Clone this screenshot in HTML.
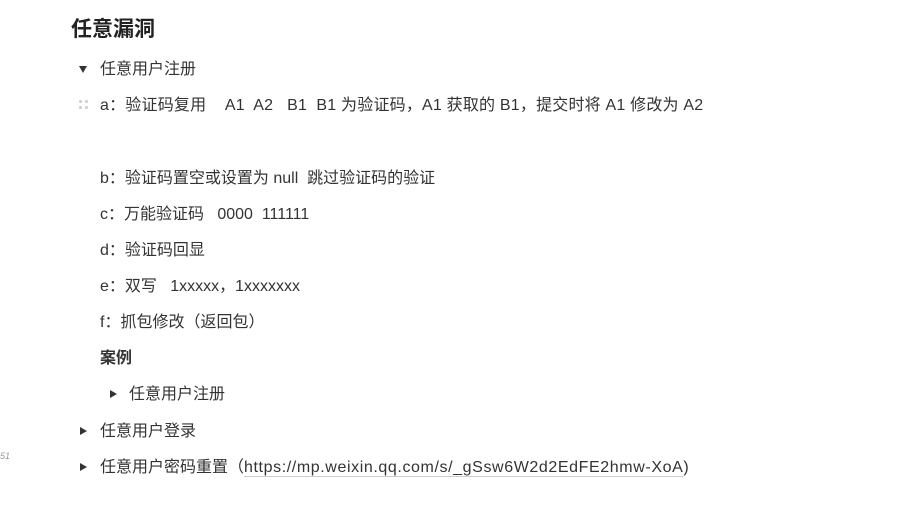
<!DOCTYPE html>
<html><head><meta charset="utf-8"><style>
body{margin:0;width:902px;height:506px;background:#fff;overflow:hidden;font-family:"Liberation Sans","Noto Sans CJK SC",sans-serif;color:#333;position:relative}
.l{position:absolute;font-size:16px;line-height:20px;white-space:pre}
.t{position:absolute;left:71px;top:17px;font-size:21px;font-weight:bold;color:#222;line-height:26px}
.tri{position:absolute;width:0;height:0}
.down{border-left:4.5px solid transparent;border-right:4.5px solid transparent;border-top:7px solid #333}
.right{border-top:4.5px solid transparent;border-bottom:4.5px solid transparent;border-left:7px solid #333}
.dot{position:absolute;width:3px;height:3px;border-radius:50%;background:#ccc}
</style></head><body>
<div class="t">任意漏洞</div>
<div class="tri down" style="left:79px;top:66px"></div>
<div class="l" style="left:100px;top:60px">任意用户注册</div>
<div class="dot" style="left:79px;top:100px"></div><div class="dot" style="left:85px;top:100px"></div>
<div class="dot" style="left:79px;top:106px"></div><div class="dot" style="left:85px;top:106px"></div>
<div class="l" style="left:100px;top:96px;letter-spacing:0.2px">a：验证码复用    A1  A2   B1  B1 为验证码，A1 获取的 B1，提交时将 A1 修改为 A2</div>
<div class="l" style="left:100px;top:169px">b：验证码置空或设置为 null  跳过验证码的验证</div>
<div class="l" style="left:100px;top:205px">c：万能验证码   0000  111111</div>
<div class="l" style="left:100px;top:241px">d：验证码回显</div>
<div class="l" style="left:100px;top:277px">e：双写   1xxxxx，1xxxxxxx</div>
<div class="l" style="left:100px;top:313px">f：抓包修改（返回包）</div>
<div class="l" style="left:100px;top:349px;font-weight:bold">案例</div>
<div class="tri right" style="left:110px;top:390px"></div>
<div class="l" style="left:129px;top:385px">任意用户注册</div>
<div class="tri right" style="left:80px;top:427px"></div>
<div class="l" style="left:100px;top:422px">任意用户登录</div>
<div class="l" style="left:0px;top:446px;font-size:9px;color:#999;font-style:italic">51</div>
<div class="tri right" style="left:80px;top:463px"></div>
<div class="l" style="left:100px;top:458px">任意用户密码重置（<span style="border-bottom:1px solid #ccc;letter-spacing:0.6px">https://mp.weixin.qq.com/s/_gSsw6W2d2EdFE2hmw-XoA</span>)</div>
</body></html>
